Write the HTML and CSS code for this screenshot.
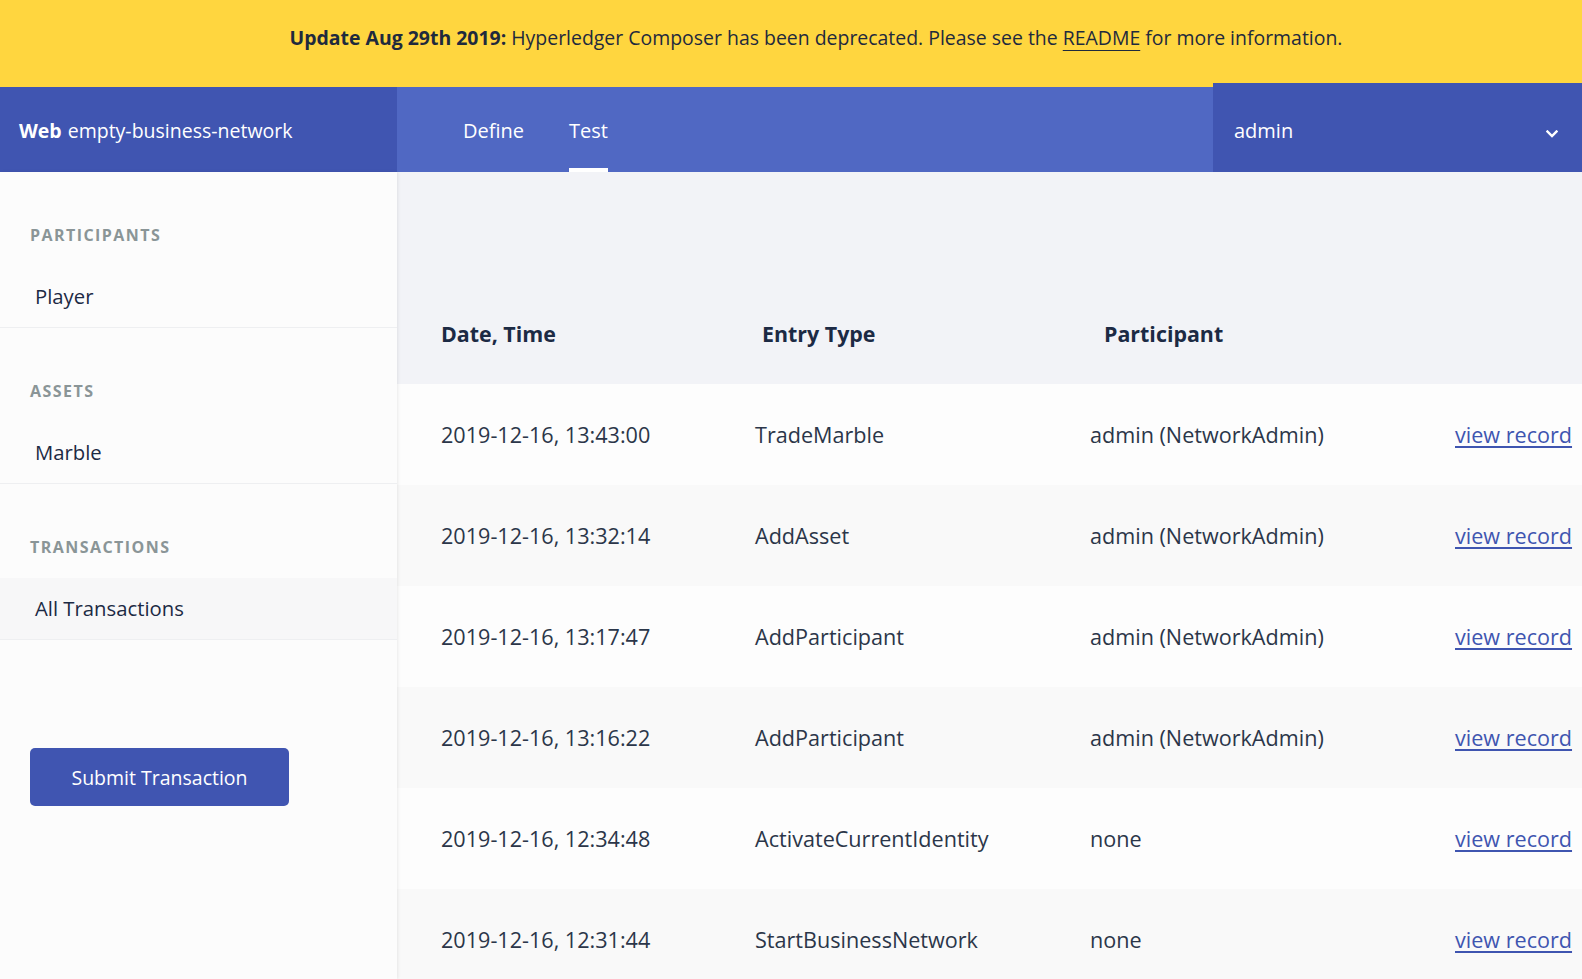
FILE: index.html
```html
<!DOCTYPE html>
<html lang="en">
<head>
<meta charset="utf-8">
<title>Hyperledger Composer Playground</title>
<link rel="stylesheet" href="styles.css">
</head>
<body>
<div class="banner">
  <p><strong>Update Aug 29th 2019:</strong> Hyperledger Composer has been deprecated. Please see the <a href="#">README</a> for more information.</p>
</div>
<header class="nav">
  <div class="brand"><strong>Web</strong> empty-business-network</div>
  <nav class="tabs">
    <a class="tab" href="#">Define</a>
    <a class="tab active" href="#">Test</a>
  </nav>
  <div class="identity">
    <span>admin</span>
    <svg class="chev" width="12" height="8" viewBox="0 0 12 8"><path d="M1.5 1.5 L6 6 L10.5 1.5" fill="none" stroke="#fff" stroke-width="2.4" stroke-linecap="square"/></svg>
  </div>
</header>
<div class="layout">
  <aside class="sidebar">
    <section class="group first">
      <h3 class="group-title">PARTICIPANTS</h3>
      <div class="item">Player</div>
    </section>
    <section class="group">
      <h3 class="group-title">ASSETS</h3>
      <div class="item">Marble</div>
    </section>
    <section class="group">
      <h3 class="group-title">TRANSACTIONS</h3>
      <div class="item selected">All Transactions</div>
    </section>
    <button class="submit">Submit Transaction</button>
  </aside>
  <main class="main">
    <div class="table">
      <div class="row head">
        <div class="c1">Date, Time</div>
        <div class="c2">Entry Type</div>
        <div class="c3">Participant</div>
        <div class="c4"></div>
      </div>
      <div class="row">
        <div class="c1">2019-12-16, 13:43:00</div>
        <div class="c2">TradeMarble</div>
        <div class="c3">admin (NetworkAdmin)</div>
        <div class="c4"><a href="#">view record</a></div>
      </div>
      <div class="row alt">
        <div class="c1">2019-12-16, 13:32:14</div>
        <div class="c2">AddAsset</div>
        <div class="c3">admin (NetworkAdmin)</div>
        <div class="c4"><a href="#">view record</a></div>
      </div>
      <div class="row">
        <div class="c1">2019-12-16, 13:17:47</div>
        <div class="c2">AddParticipant</div>
        <div class="c3">admin (NetworkAdmin)</div>
        <div class="c4"><a href="#">view record</a></div>
      </div>
      <div class="row alt">
        <div class="c1">2019-12-16, 13:16:22</div>
        <div class="c2">AddParticipant</div>
        <div class="c3">admin (NetworkAdmin)</div>
        <div class="c4"><a href="#">view record</a></div>
      </div>
      <div class="row">
        <div class="c1">2019-12-16, 12:34:48</div>
        <div class="c2">ActivateCurrentIdentity</div>
        <div class="c3">none</div>
        <div class="c4"><a href="#">view record</a></div>
      </div>
      <div class="row alt">
        <div class="c1">2019-12-16, 12:31:44</div>
        <div class="c2">StartBusinessNetwork</div>
        <div class="c3">none</div>
        <div class="c4"><a href="#">view record</a></div>
      </div>
    </div>
  </main>
</div>
</body>
</html>
```
FILE: styles.css
```css
* { box-sizing: border-box; }
html, body { margin: 0; padding: 0; }
body {
  font-family: "Open Sans", "Noto Sans", sans-serif;
  color: #1c2a44;
  background: #f2f3f7;
  height: 979px;
  overflow: hidden;
}

.banner {
  height: 87px;
  background: #ffd63f;
  display: flex;
  justify-content: center;
  padding: 24px 0 0 50px;
}
.banner p {
  margin: 0;
  font-size: 19.45px;
  line-height: 28px;
  color: #1f2a3d;
}
.banner strong { font-weight: 700; }
.banner a { color: #1f2a3d; text-decoration: underline; text-underline-offset: 5px; }

.nav {
  display: flex;
  height: 85px;
  background: #5068c3;
  color: #fff;
}
.brand {
  width: 397px;
  background: #4055b1;
  padding: 2px 0 0 19px;
  display: flex;
  align-items: center;
  font-size: 19.5px;
}
.brand strong { font-weight: 700; margin-right: 6px; }
.tabs {
  flex: 1;
  display: flex;
  padding-left: 66px;
  gap: 45px;
}
.tab {
  color: #fff;
  text-decoration: none;
  font-size: 20px;
  display: flex;
  align-items: center;
  border-bottom: 4px solid transparent;
  padding-top: 6px;
}
.tab.active { border-bottom-color: #fff; }
.identity {
  width: 369px;
  margin-top: -4px;
  height: 89px;
  background: #4055b1;
  display: flex;
  align-items: center;
  justify-content: space-between;
  padding: 6px 24px 0 21px;
  font-size: 20px;
}
.chev { margin-top: 6px; }

.layout {
  display: flex;
  height: 807px;
}
.sidebar {
  width: 397px;
  flex: none;
  background: #fcfcfc;
  box-shadow: 1px 0 3px rgba(0,0,0,0.08);
  position: relative;
  z-index: 1;
}
.group { padding-top: 51px; }
.group.first { padding-top: 51px; }
.group-title {
  margin: 0 0 19px 30px;
  font-size: 16px;
  line-height: 24px;
  font-weight: 700;
  letter-spacing: 1.45px;
  color: #8a9597;
}
.item {
  height: 62px;
  display: flex;
  align-items: center;
  padding: 0 0 2px 35px;
  font-size: 20.3px;
  color: #1c2a44;
  border-bottom: 1px solid #eeeff1;
}
.item.selected { background: #f7f7f8; }
.submit {
  margin: 108px 0 0 30px;
  width: 259px;
  height: 58px;
  border: none;
  border-radius: 5px;
  background: #4055b1;
  color: #fff;
  font-family: inherit;
  font-size: 19.5px;
  padding: 0;
}

.main {
  flex: 1;
  padding-top: 111px;
}
.row {
  display: grid;
  grid-template-columns: 314px 335px 365px 1fr;
  height: 101px;
  align-items: center;
  padding-left: 44px;
  background: #fdfdfd;
  font-size: 21.6px;
  color: #2b3649;
}
.row.alt { background: #f9f9f9; }
.row.head {
  background: #f2f3f7;
  font-weight: 700;
  color: #1c2a44;
  font-size: 21.4px;
}
.row.head .c2 { padding-left: 7px; }
.row.head .c3 { padding-left: 14px; }
.c4 a { color: #3f55b0; text-decoration: underline; text-underline-offset: 3px; }
```
